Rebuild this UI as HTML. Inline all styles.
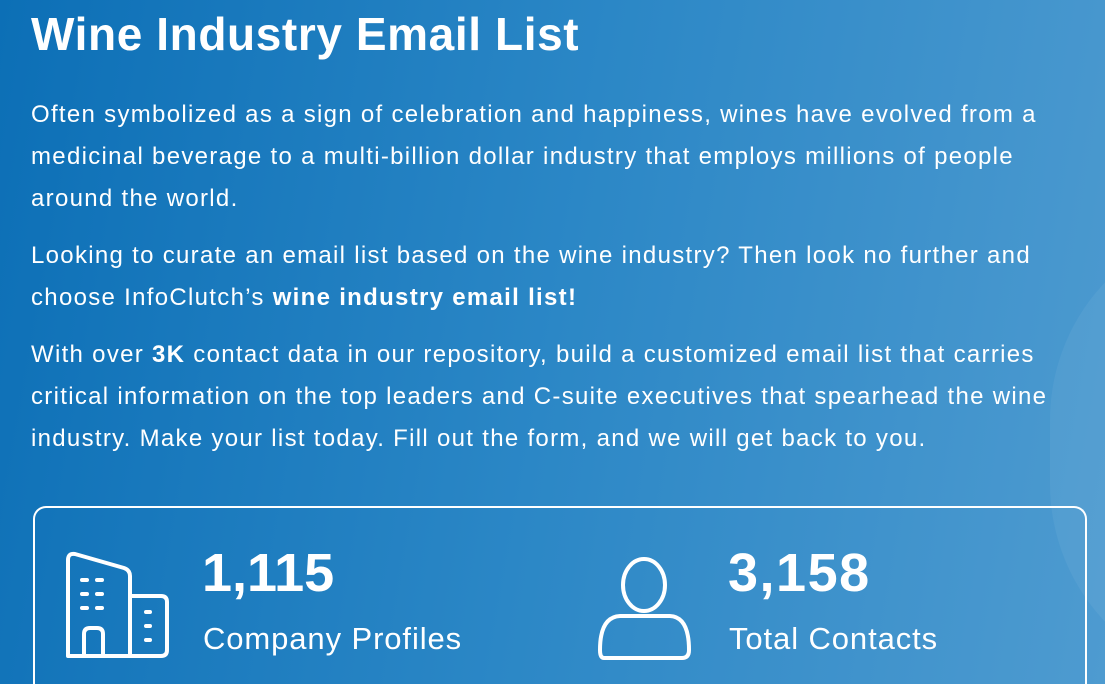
<!DOCTYPE html>
<html><head><meta charset="utf-8"><style>
html,body{margin:0;padding:0;width:1105px;height:684px;overflow:hidden;}
body{position:relative;
background:linear-gradient(100deg,#0c6fb6 0%,#2b87c6 50%,#4e9bd0 100%);
font-family:"Liberation Sans",sans-serif;color:#fff;}
.glow{position:absolute;left:1050px;top:220px;width:400px;height:464px;border-radius:200px 0 0 200px;background:rgba(255,255,255,0.05);}
h1{position:absolute;left:31px;top:7px;margin:0;font-size:46px;font-weight:bold;letter-spacing:0.6px;white-space:nowrap;}
.p{position:absolute;left:31px;font-size:24px;line-height:42px;letter-spacing:1.3px;white-space:nowrap;}
.box{position:absolute;left:33px;top:506px;width:1050px;height:190px;border:2px solid #fff;border-bottom:none;border-radius:13px 13px 0 0;box-sizing:border-box;width:1054px;height:178px;}
.num{position:absolute;font-size:54px;font-weight:bold;top:542px;}
.lbl{position:absolute;font-size:31px;top:621px;letter-spacing:0.9px;}
</style></head><body>
<div class="glow"></div>
<h1>Wine Industry Email List</h1>
<div class="p" style="top:94px">Often symbolized as a sign of celebration and happiness, wines have evolved from a<br>medicinal beverage to a multi-billion dollar industry that employs millions of people<br>around the world.</div>
<div class="p" style="top:235px">Looking to curate an email list based on the wine industry? Then look no further and<br>choose InfoClutch’s <b>wine industry email list!</b></div>
<div class="p" style="top:334px">With over <b>3K</b> contact data in our repository, build a customized email list that carries<br>critical information on the top leaders and C-suite executives that spearhead the wine<br>industry. Make your list today. Fill out the form, and we will get back to you.</div>
<div class="box"></div>
<svg style="position:absolute;left:60px;top:548px" width="120" height="120" viewBox="0 0 120 120" fill="none" stroke="#fff" stroke-width="4" stroke-linecap="round" stroke-linejoin="round">
<path d="M8 108 V12 Q8 5 15 6 L64 20 Q70 22 70 28 V108 Z"/>
<path d="M70 48 H101 Q107 48 107 54 V102 Q107 108 101 108 H70"/>
<path d="M24 108 V86 Q24 80 30 80 H37 Q43 80 43 86 V108"/>
<path d="M22 32h5M37 32h5M22 46h5M37 46h5M22 60h5M37 60h5M86 64h4M86 78h4M86 92h4"/>
</svg>
<svg style="position:absolute;left:592px;top:550px" width="105" height="115" viewBox="0 0 105 115" fill="none" stroke="#fff" stroke-width="4">
<ellipse cx="52" cy="35" rx="21" ry="26"/>
<path d="M12 108 H90 Q97 108 97 100 Q97 67 78 66 H28 Q8 67 8 100 Q8 108 12 108 Z"/>
</svg>
<div class="num" style="left:202px">1,115</div>
<div class="lbl" style="left:203px">Company Profiles</div>
<div class="num" style="left:728px;letter-spacing:1.5px">3,158</div>
<div class="lbl" style="left:729px">Total Contacts</div>
</body></html>
